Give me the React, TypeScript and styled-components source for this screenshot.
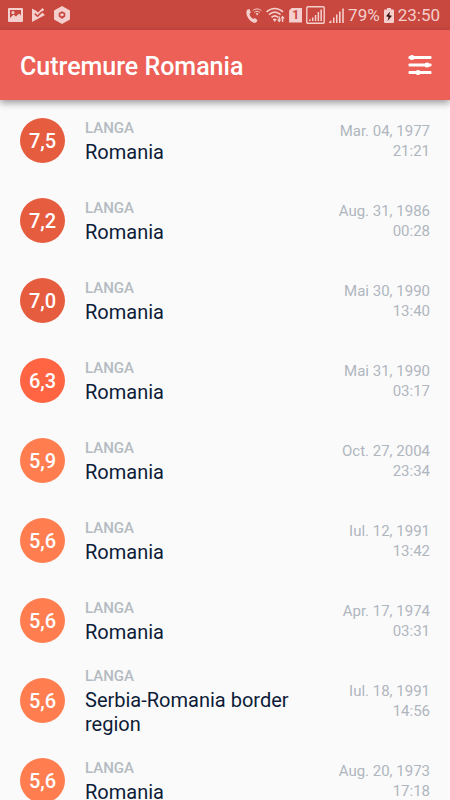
import React from "react";
import styled, { createGlobalStyle } from "styled-components";

const GlobalStyle = createGlobalStyle`
  *, *::before, *::after { box-sizing: border-box; }
  html { scrollbar-width: none; }
  body {
    margin: 0;
    background: #fafafa;
    font-family: Roboto, "Liberation Sans", sans-serif;
  }
`;

const Screen = styled.div`
  min-height: 100vh;
  background: #fafafa;
`;

const StatusBar = styled.div`
  display: flex;
  align-items: center;
  justify-content: space-between;
  height: 30px;
  padding: 0 10px 0 8px;
  background: #c8473e;
  color: #f4cfcd;
`;

const StatusGroup = styled.div<{ $gap: number }>`
  display: flex;
  align-items: center;
  gap: ${(p) => p.$gap}px;

  svg {
    display: block;
    flex: none;
  }
`;

const StatusText = styled.span`
  font-size: 17px;
  line-height: 30px;
`;

const Header = styled.header`
  position: relative;
  display: flex;
  align-items: center;
  justify-content: space-between;
  height: 70px;
  padding: 0 18px 0 20px;
  background: #ed6057;
  box-shadow: 0 3px 7px rgba(0, 0, 0, 0.38);
`;

const Title = styled.h1`
  margin: 0;
  padding-top: 3px;
  color: #fff;
  font-size: 25px;
  font-weight: 500;
  line-height: 30px;
`;

const FilterButton = styled.button`
  display: flex;
  padding: 0;
  border: 0;
  background: none;
  color: #fff;
  cursor: pointer;
`;

const List = styled.ul`
  margin: 0;
  padding: 0;
  list-style: none;
`;

const Row = styled.li`
  display: flex;
  align-items: center;
  min-height: 80px;
  padding: 0 20px;
`;

const Magnitude = styled.div<{ $color: string }>`
  display: flex;
  align-items: center;
  justify-content: center;
  flex: none;
  width: 45px;
  height: 45px;
  padding-top: 2px;
  border-radius: 50%;
  background: ${(p) => p.$color};
  color: #fff;
  font-size: 20px;
  font-weight: 500;
  line-height: 24px;
`;

const Place = styled.div`
  flex: 1;
  min-width: 0;
  margin: 0 20px;
  padding-top: 2px;
`;

const Near = styled.div`
  color: #b4bac1;
  font-size: 15px;
  font-weight: 500;
  line-height: 20px;
`;

const Region = styled.div`
  padding-top: 2px;
  color: #0d1c38;
  font-size: 20px;
  line-height: 24px;
`;

const When = styled.time`
  flex: none;
  width: 100px;
  padding-top: 2px;
  color: #b0b6be;
  font-size: 15px;
  line-height: 20px;
  text-align: right;
`;

const Line = styled.span`
  display: block;
`;

const quakes = [
  { mag: "7,5", region: "Romania", date: "Mar. 04, 1977", time: "21:21" },
  { mag: "7,2", region: "Romania", date: "Aug. 31, 1986", time: "00:28" },
  { mag: "7,0", region: "Romania", date: "Mai 30, 1990", time: "13:40" },
  { mag: "6,3", region: "Romania", date: "Mai 31, 1990", time: "03:17" },
  { mag: "5,9", region: "Romania", date: "Oct. 27, 2004", time: "23:34" },
  { mag: "5,6", region: "Romania", date: "Iul. 12, 1991", time: "13:42" },
  { mag: "5,6", region: "Romania", date: "Apr. 17, 1974", time: "03:31" },
  { mag: "5,6", region: "Serbia-Romania border region", date: "Iul. 18, 1991", time: "14:56" },
  { mag: "5,6", region: "Romania", date: "Aug. 20, 1973", time: "17:18" },
];

const colorFor = (mag: string) => {
  const value = parseFloat(mag.replace(",", "."));
  if (value >= 7) return "#e65c3f";
  if (value >= 6) return "#ff6542";
  return "#ff7d4f";
};

const PictureIcon = () => (
  <svg width="15" height="14" viewBox="0 0 15 14" aria-hidden="true">
    <path
      fill="currentColor"
      fillRule="evenodd"
      d="M1 0h13a1 1 0 0 1 1 1v12a1 1 0 0 1-1 1H1a1 1 0 0 1-1-1V1a1 1 0 0 1 1-1zm1 2v8l3.500-3.500 2.500 2 3-3 2 2V2z"
    />
    <circle cx="5" cy="4.400" r="1.500" fill="currentColor" />
  </svg>
);

const PlayCheckIcon = () => (
  <svg width="13" height="14" viewBox="0 0 13 14" aria-hidden="true">
    <path fill="currentColor" d="M0 .5 4.500 3 6 4.500 10.500 0 12 1.500 10.300 4.800 13 7 0 14z" />
    <path fill="none" stroke="#c8473e" strokeWidth="1.500" d="M2.800 5.600 5.500 8.200 10.600 3.400" />
  </svg>
);

const HexIcon = () => (
  <svg width="16" height="18" viewBox="0 0 16 18" aria-hidden="true">
    <path
      fill="currentColor"
      stroke="currentColor"
      strokeWidth="1.500"
      strokeLinejoin="round"
      d="M8 .8 15.200 4.800v8.400L8 17.200.8 13.200V4.800z"
    />
    <path d="M8 5.200 11.300 7v3.500L8 13l-3.300-2.500V7z" fill="#c8473e" />
    <path d="M6 8 9 7.200l1 2-3 1.200z" fill="currentColor" />
  </svg>
);

const WifiCallIcon = () => (
  <svg width="16" height="15" viewBox="0 0 16 15" aria-hidden="true">
    <path
      fill="currentColor"
      d="M1.500 1.500 3.500 1 4.800 4.600 3.400 6c.6 2.200 2 4 3.800 5l1.700-1.100 2.700 2.400-1.300 1.900c-1 .7-2.200.7-3.600 0C3.200 12.400.6 8.600.4 4.700.4 3.300.8 2.200 1.500 1.500z"
    />
    <g fill="none" stroke="currentColor">
      <path d="M6.800 2.600c2.600-2.200 6-2.200 8.600 0M8.300 4.400c1.700-1.400 3.900-1.400 5.600 0" />
    </g>
    <path d="m9.600 5.600 1.500 1.900 1.500-1.900c-.9-.7-2.100-.7-3 0z" fill="currentColor" />
  </svg>
);

const WifiIcon = () => (
  <svg width="19" height="16" viewBox="0 0 19 16" aria-hidden="true">
    <g fill="none" stroke="currentColor" strokeWidth="1.600">
      <path d="M.6 4.800C5.600.4 12 .4 17 4.800M3 7.600c3.600-3.100 8-3.100 11.600 0M5.500 10.300c2-1.700 4.600-1.700 6.600 0" />
    </g>
    <path d="m6.800 12.200 2 2.800 1.800-2.800c-1.100-.9-2.700-.9-3.800 0z" fill="currentColor" />
    <path d="m11 12.500 2.200 3 2.200-3h-1.500V9.500h-1.400v3zM14.400 11.500h1.500V15h1.400v-3.500h1.500l-2.200-3z" fill="currentColor" />
  </svg>
);

const SimShape = styled.span`
  display: flex;
  align-items: center;
  justify-content: center;
  width: 13px;
  height: 15px;
  background: #f4cfcd;
  clip-path: polygon(3px 0, 100% 0, 100% 100%, 0 100%, 0 3px);
  color: #c8473e;
  font-size: 12px;
  font-weight: 700;
  line-height: 15px;
`;

const BoxedSignalIcon = () => (
  <svg width="19" height="18" viewBox="0 0 19 18" aria-hidden="true">
    <rect x=".8" y=".8" width="17.400" height="16.400" rx="1" fill="none" stroke="currentColor" strokeWidth="1.400" />
    <path
      fill="currentColor"
      d="M3 15v-1l1.500-1.500V15zM6 11.500h1.500V15H6zM8.800 9h1.500v6H8.800zM11.600 6h1.500v9h-1.500zM14.400 3.500h1.500V15h-1.500z"
    />
  </svg>
);

const SignalIcon = () => (
  <svg width="15" height="16" viewBox="0 0 15 16" aria-hidden="true">
    <path
      fill="currentColor"
      d="M0 16v-.8L2.400 13v3zM4 10.500h1.500V16H4zM7 7.500h1.500V16H7zM10 4.500h1.600V16H10zM13.200 1.500h1.600V16h-1.600z"
    />
  </svg>
);

const BatteryIcon = () => (
  <svg width="10" height="15" viewBox="0 0 10 15" aria-hidden="true">
    <path fill="currentColor" d="M3 0h4v1.500h2a1 1 0 0 1 1 1V14a1 1 0 0 1-1 1H1a1 1 0 0 1-1-1V2.500a1 1 0 0 1 1-1h2z" />
    <path fill="#3d1714" d="M6 3.500 2 8.300l2.500.7L3.600 13 8 7.800 5.300 7.200z" />
  </svg>
);

const SlidersIcon = () => (
  <svg width="24" height="20" viewBox="0 0 24 20" fill="currentColor" aria-hidden="true">
    <rect x=".5" y="1" width="23" height="3" rx="1" />
    <rect x=".5" y="8.500" width="23" height="3" rx="1" />
    <rect x=".5" y="16" width="23" height="3" rx="1" />
    <circle cx="4" cy="2.500" r="2.500" />
    <circle cx="19" cy="10" r="2.500" />
    <circle cx="10" cy="17.500" r="2.500" />
  </svg>
);

export default function App() {
  return (
    <Screen>
      <GlobalStyle />
      <StatusBar>
        <StatusGroup $gap={9}>
          <PictureIcon />
          <PlayCheckIcon />
          <HexIcon />
        </StatusGroup>
        <StatusGroup $gap={4}>
          <WifiCallIcon />
          <WifiIcon />
          <SimShape>1</SimShape>
          <BoxedSignalIcon />
          <SignalIcon />
          <StatusText>79%</StatusText>
          <BatteryIcon />
          <StatusText>23:50</StatusText>
        </StatusGroup>
      </StatusBar>
      <Header>
        <Title>Cutremure Romania</Title>
        <FilterButton type="button" aria-label="Filtre">
          <SlidersIcon />
        </FilterButton>
      </Header>
      <List>
        {quakes.map((q) => (
          <Row key={q.date}>
            <Magnitude $color={colorFor(q.mag)}>{q.mag}</Magnitude>
            <Place>
              <Near>LANGA</Near>
              <Region>{q.region}</Region>
            </Place>
            <When>
              <Line>{q.date}</Line>
              <Line>{q.time}</Line>
            </When>
          </Row>
        ))}
      </List>
    </Screen>
  );
}
